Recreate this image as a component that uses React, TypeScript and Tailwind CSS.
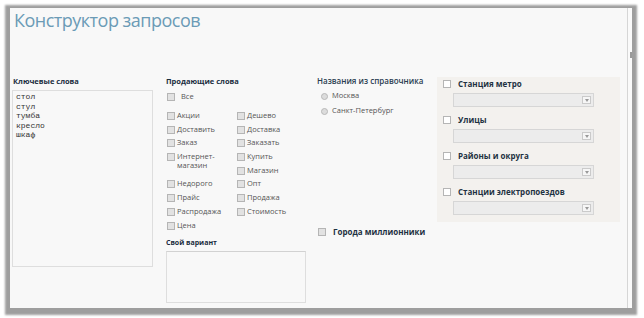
import type { ReactNode } from 'react'

const font = { fontFamily: '"Open Sans", "Noto Sans", sans-serif' }

function Box({ white = false }: { white?: boolean }) {
  return (
    <span
      className={`inline-block w-[8px] h-[8px] shrink-0 border border-[#b5b5b5] ${
        white ? 'bg-white' : 'bg-[#e2e2e2]'
      }`}
    />
  )
}

function Check({ children, className = '' }: { children: ReactNode; className?: string }) {
  return (
    <div className={`flex items-start gap-[2px] text-[7.5px] leading-[9px] text-[#555] ${className}`}>
      <span className="mt-[1px] flex">
        <Box />
      </span>
      <span>{children}</span>
    </div>
  )
}

function Radio({ label }: { label: string }) {
  return (
    <div className="flex items-center h-[12px] text-[7.5px] text-[#555]">
      <span className="ml-[4px] w-[7px] h-[7px] rounded-full border border-[#b8b8b8] bg-[#dcdcdc]" />
      <span className="ml-[4px]">{label}</span>
    </div>
  )
}

function Pick({ label }: { label: string }) {
  return (
    <div>
      <div className="flex items-center h-[10px]">
        <span className="ml-[6px] flex">
          <Box white />
        </span>
        <span className="ml-[7px] text-[8px] font-bold text-[#1e3142]">{label}</span>
      </div>
      <div className="ml-[16px] mt-[4px] w-[141px] h-[14px] bg-[#ececec] border border-[#d6d6d6] flex items-center justify-end pr-[2px]">
        <span className="w-[9px] h-[8px] bg-[#f6f6f6] border border-[#cacaca] flex items-center justify-center">
          <svg width="4" height="3" viewBox="0 0 4 3">
            <path d="M0 0 L4 0 L2 3 Z" fill="#999" />
          </svg>
        </span>
      </div>
    </div>
  )
}

const words = ['стол', 'стул', 'тумба', 'кресло', 'шкаф']

export default function App() {
  return (
    <div className="w-[644px] h-[318px] bg-white pt-[8px] pl-[10px] overflow-hidden" style={font}>
      <div className="w-[622px] h-[300px] flex bg-[#f8f8f8] shadow-[0_2px_2px_5px_rgba(0,0,0,0.38)]">
        <div className="flex-1 flex flex-col">
          <div className="h-[68px] pl-[4px]">
            <h1 className="text-[18px] leading-[24px] text-[#6b9bb6] tracking-[-0.5px]">Конструктор запросов</h1>
          </div>

          <div className="flex">
            <div className="ml-[2px] w-[141px]">
              <div className="h-[10px] leading-[10px] pl-[1px] text-[7.5px] font-bold text-[#1a2d3e]">Ключевые слова</div>
              <div className="mt-[4px] h-[177px] border border-[#dedede] pl-[3px] pt-[1px] text-[8px] leading-[9.6px] text-[#333]" style={{ fontFamily: '"Liberation Mono", monospace' }}>
                {words.map(w => (
                  <div key={w}>{w}</div>
                ))}
              </div>
            </div>

            <div className="ml-[13px] w-[140px]">
              <div className="h-[10px] leading-[10px] text-[7.5px] font-bold text-[#1a2d3e]">Продающие слова</div>
              <div className="mt-[6px] h-[10px] flex items-center text-[7.5px] text-[#555] pl-[1px]">
                <Box />
                <span className="ml-[6px]">Все</span>
              </div>
              <div className="mt-[7px] grid grid-cols-[70px_70px] auto-rows-[13.7px] pl-[1px]">
                <Check className="col-start-1 row-start-1 mt-[2px]">Акции</Check>
                <Check className="col-start-1 row-start-2 mt-[2px]">Доставить</Check>
                <Check className="col-start-1 row-start-3 mt-[2px]">Заказ</Check>
                <Check className="col-start-1 row-start-4 row-span-2 mt-[2px]">
                  Интернет-
                  <br />
                  магазин
                </Check>
                <Check className="col-start-1 row-start-6 mt-[2px]">Недорого</Check>
                <Check className="col-start-1 row-start-7 mt-[2px]">Прайс</Check>
                <Check className="col-start-1 row-start-8 mt-[2px]">Распродажа</Check>
                <Check className="col-start-1 row-start-9 mt-[2px]">Цена</Check>
                <Check className="col-start-2 row-start-1 mt-[2px]">Дешево</Check>
                <Check className="col-start-2 row-start-2 mt-[2px]">Доставка</Check>
                <Check className="col-start-2 row-start-3 mt-[2px]">Заказать</Check>
                <Check className="col-start-2 row-start-4 mt-[2px]">Купить</Check>
                <Check className="col-start-2 row-start-5 mt-[2px]">Магазин</Check>
                <Check className="col-start-2 row-start-6 mt-[2px]">Опт</Check>
                <Check className="col-start-2 row-start-7 mt-[2px]">Продажа</Check>
                <Check className="col-start-2 row-start-8 mt-[2px]">Стоимость</Check>
              </div>
              <div className="mt-[6px] h-[10px] leading-[10px] text-[7px] font-bold text-[#1a2d3e]">Свой вариант</div>
              <div className="mt-[3px] w-[140px] h-[52px] border border-[#dedede] border-t-[#d2d2d2]" />
            </div>

            <div className="ml-[11px] w-[120px]">
              <div className="h-[10px] leading-[10px] text-[8px] font-semibold text-[#2a3d50]">Названия из справочника</div>
              <div className="mt-[4px] flex flex-col gap-[3px]">
                <Radio label="Москва" />
                <Radio label="Санкт-Петербург" />
              </div>
              <div className="mt-[109px] h-[12px] flex items-center">
                <span className="ml-[1px] flex">
                  <Box />
                </span>
                <span className="ml-[7px] text-[8px] font-bold text-[#1e3142]">Города миллионники</span>
              </div>
            </div>

            <div className="mt-[1px] w-[183px] h-[145px] bg-[#f3f1ee] pt-[2px] flex flex-col gap-[8px]">
              <Pick label="Станция метро" />
              <Pick label="Улицы" />
              <Pick label="Районы и округа" />
              <Pick label="Станции электропоездов" />
            </div>
          </div>
        </div>

        <div className="w-[5px] flex border-l border-[#d6d6d6] bg-[#fafafa]">
          <div className="ml-auto mt-[44px] w-[2px] h-[6px] bg-[#9a9a9a]" />
        </div>
      </div>
    </div>
  )
}
